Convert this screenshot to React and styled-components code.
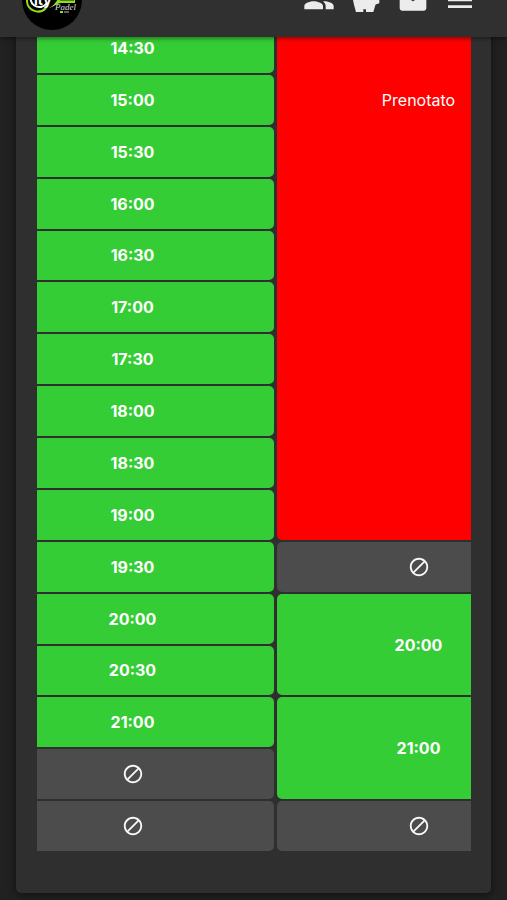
import React, { useEffect, useRef } from 'react';
import styled, { createGlobalStyle } from 'styled-components';
import { MdPeople, MdSavings, MdEmail, MdMenu, MdBlock } from 'react-icons/md';

const GlobalStyle = createGlobalStyle`
  * {
    box-sizing: border-box;
  }

  body {
    margin: 0;
    background: #212121;
    color: #fff;
    font-family: Inter, Roboto, sans-serif;
    overflow-x: hidden;
  }
`;

const Header = styled.header`
  position: relative;
  z-index: 2;
  display: flex;
  align-items: center;
  justify-content: space-between;
  height: 74px;
  margin-top: -37px;
  padding: 0 31px 0 21px;
  background: #303030;
  box-shadow: 0 1px 5px rgba(0, 0, 0, 0.5);
`;

const LogoLink = styled.a`
  display: block;
  height: 62px;

  svg {
    display: block;
  }
`;

const Nav = styled.nav`
  display: flex;
  gap: 15px;
`;

const NavButton = styled.button`
  display: flex;
  padding: 0;
  border: none;
  background: none;
  color: #ececec;
  font-size: 32px;
  cursor: pointer;
`;

const Card = styled.main`
  margin: -16px 16px 7px;
  padding: 0 20px 40px 21px;
  border-radius: 5px;
  background: #2f2f2f;
  box-shadow: 0 2px 8px rgba(0, 0, 0, 0.5);
`;

const Scroller = styled.div`
  overflow-x: auto;
  scrollbar-width: none;
`;

const Table = styled.table`
  width: 100%;
  min-width: 575px;
  height: 832px;
  table-layout: fixed;
  border-collapse: separate;
  border-spacing: 3px 2px;
`;

const colors = {
  free: '#35cd35',
  booked: '#ff0000',
  blocked: '#4c4c4c',
};

const Cell = styled.td`
  height: 48px;
  padding: 0;
  border-radius: 5px;
  background: ${(props) => colors[props.$status]};
  text-align: center;
  vertical-align: ${(props) => (props.$status === 'booked' ? 'top' : 'middle')};
`;

const SlotButton = styled.button`
  width: 100%;
  padding: 0;
  border: none;
  background: none;
  color: #fff;
  font-family: inherit;
  font-size: 16px;
  font-weight: 700;
  line-height: 24px;
  cursor: pointer;
`;

const BookedLabel = styled.span`
  display: block;
  padding-top: 65px;
  font-size: 16px;
  line-height: 24px;
`;

const BlockedIcon = styled(MdBlock)`
  display: block;
  margin: 0 auto;
  color: #f8f8f8;
  font-size: 22px;
`;

// one entry per half hour, left court then right court
const rows = [
  [{ time: '14:30' }, { status: 'booked', span: 10 }],
  [{ time: '15:00' }],
  [{ time: '15:30' }],
  [{ time: '16:00' }],
  [{ time: '16:30' }],
  [{ time: '17:00' }],
  [{ time: '17:30' }],
  [{ time: '18:00' }],
  [{ time: '18:30' }],
  [{ time: '19:00' }],
  [{ time: '19:30' }, { status: 'blocked' }],
  [{ time: '20:00' }, { time: '20:00', span: 2 }],
  [{ time: '20:30' }],
  [{ time: '21:00' }, { time: '21:00', span: 2 }],
  [{ status: 'blocked' }],
  [{ status: 'blocked' }, { status: 'blocked' }],
];

const Slot = ({ time, status = 'free', span = 1 }) => (
  <Cell $status={status} rowSpan={span}>
    {status === 'free' && <SlotButton type="button">{time}</SlotButton>}
    {status === 'booked' && <BookedLabel>Prenotato</BookedLabel>}
    {status === 'blocked' && <BlockedIcon aria-label="Non disponibile" />}
  </Cell>
);

const Logo = () => (
  <svg width="62" height="62" viewBox="0 0 62 62" aria-hidden="true">
    <circle cx="31" cy="31" r="30" fill="#000" />
    <path d="M6 31a11 11 0 0 0 19 8" fill="none" stroke="#8fe01c" strokeWidth="2" />
    <path d="M24 22a9 9 0 1 0 2 12" fill="none" stroke="#fff" strokeWidth="2" />
    <text x="13" y="36" fill="#fff" fontFamily="Inter, sans-serif" fontSize="14" fontWeight="700">
      ity
    </text>
    <path d="M28 39c5-2 7-7 11-11h15v6H40c-4 0-7 4-12 5z" fill="#8fe01c" />
    <path d="M39 31h14" stroke="#111" strokeWidth="1" />
    <text x="34" y="41" fill="#ddd" fontFamily="Liberation Serif, serif" fontSize="9" fontStyle="italic">
      Padel
    </text>
    <path d="M39 43h3" stroke="#8fe01c" strokeWidth="2" />
    <path d="M43 43h5" stroke="#bbb" strokeWidth="1" />
  </svg>
);

const App = () => {
  const scrollerRef = useRef(null);

  useEffect(() => {
    scrollerRef.current.scrollLeft = 49;
  }, []);

  return (
    <>
      <GlobalStyle />
      <Header>
        <LogoLink href="#" aria-label="Home">
          <Logo />
        </LogoLink>
        <Nav>
          <NavButton type="button" aria-label="Utenti">
            <MdPeople />
          </NavButton>
          <NavButton type="button" aria-label="Credito">
            <MdSavings />
          </NavButton>
          <NavButton type="button" aria-label="Messaggi">
            <MdEmail />
          </NavButton>
          <NavButton type="button" aria-label="Menu">
            <MdMenu />
          </NavButton>
        </Nav>
      </Header>
      <Card>
        <Scroller ref={scrollerRef}>
          <Table>
            <tbody>
              {rows.map((slots, i) => (
                <tr key={i}>
                  {slots.map((slot, j) => (
                    <Slot key={j} {...slot} />
                  ))}
                </tr>
              ))}
            </tbody>
          </Table>
        </Scroller>
      </Card>
    </>
  );
};

export default App;
